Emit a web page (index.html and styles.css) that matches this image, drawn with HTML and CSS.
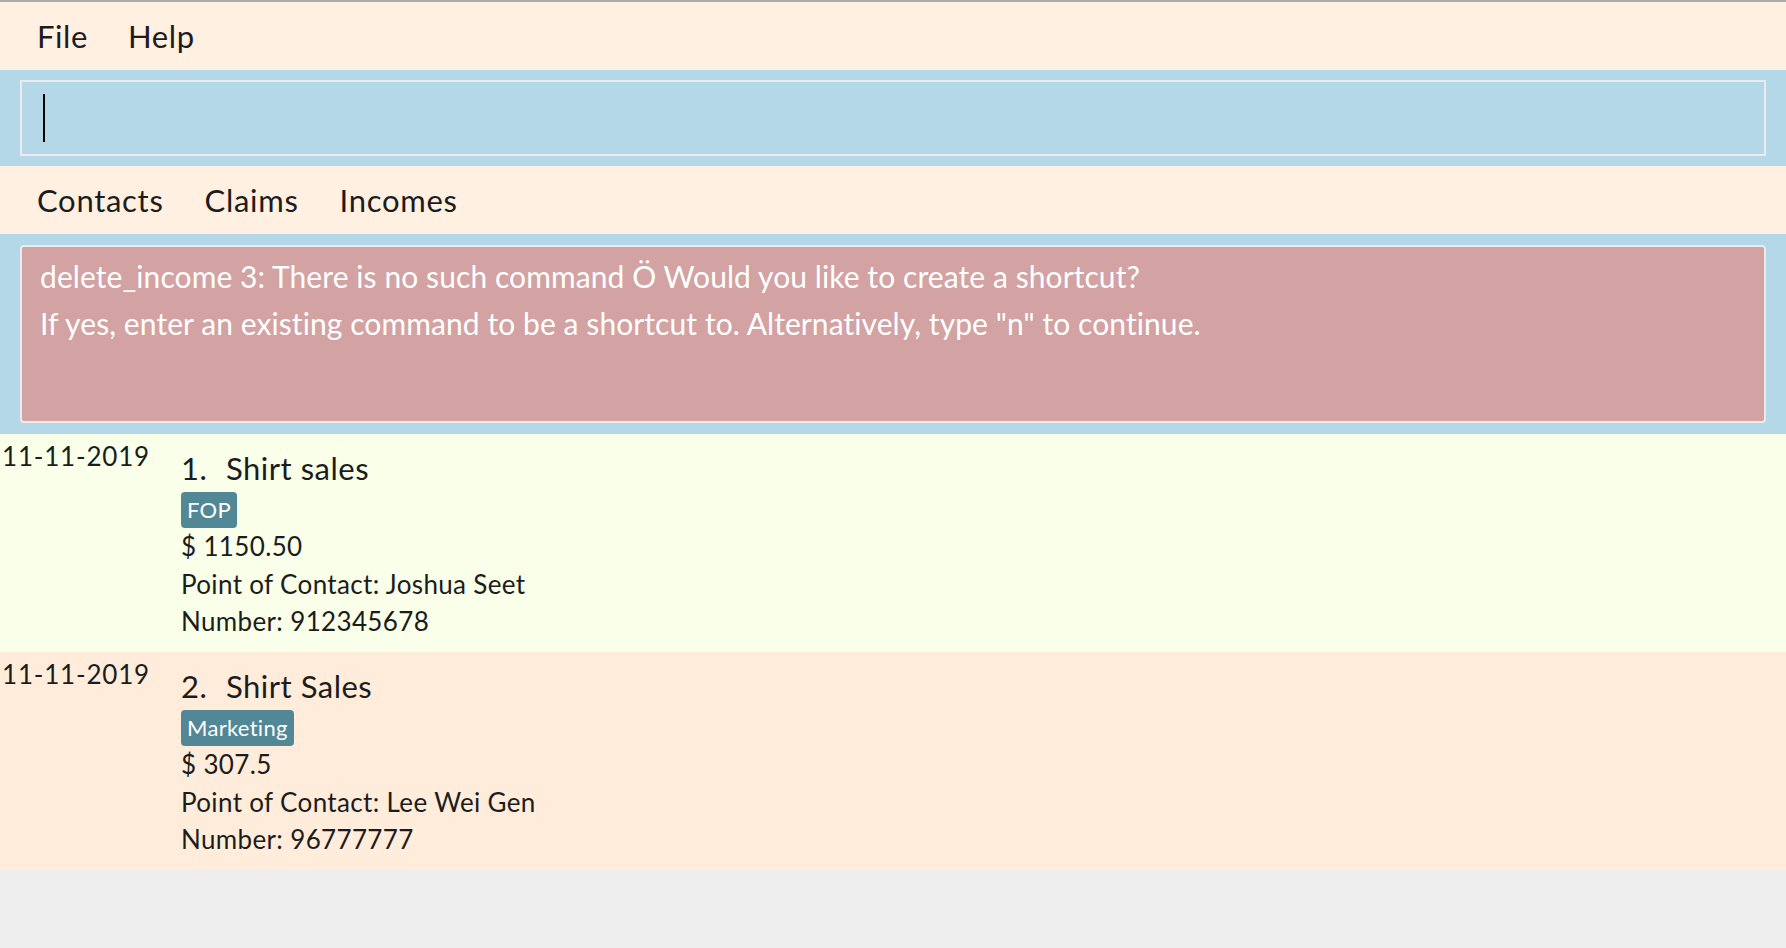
FILE: index.html
```html
<!DOCTYPE html>
<html lang="en">
<head>
<meta charset="utf-8">
<title>Incomes</title>
<link rel="stylesheet" href="styles.css">
</head>
<body>
<div class="app">
  <nav class="menubar">
    <span class="menu-item">File</span>
    <span class="menu-item">Help</span>
  </nav>
  <section class="command-pane">
    <div class="command-box"><span class="caret"></span></div>
  </section>
  <nav class="tabbar">
    <span class="tab">Contacts</span>
    <span class="tab">Claims</span>
    <span class="tab">Incomes</span>
  </nav>
  <section class="result-pane">
    <div class="result-box">
      <p class="result-line">delete_income 3: There is no such command Ö Would you like to create a shortcut?</p>
      <p class="result-line">If yes, enter an existing command to be a shortcut to. Alternatively, type "n" to continue.</p>
    </div>
  </section>
  <ul class="income-list">
    <li class="card card-odd">
      <div class="card-date">11-11-2019</div>
      <div class="card-body">
        <div class="card-title"><span class="card-index">1.</span>Shirt sales</div>
        <div class="tags"><span class="tag">FOP</span></div>
        <div class="card-line">$ 1150.50</div>
        <div class="card-line">Point of Contact: Joshua Seet</div>
        <div class="card-line">Number: 912345678</div>
      </div>
    </li>
    <li class="card card-even">
      <div class="card-date">11-11-2019</div>
      <div class="card-body">
        <div class="card-title"><span class="card-index">2.</span>Shirt Sales</div>
        <div class="tags"><span class="tag">Marketing</span></div>
        <div class="card-line">$ 307.5</div>
        <div class="card-line">Point of Contact: Lee Wei Gen</div>
        <div class="card-line">Number: 96777777</div>
      </div>
    </li>
  </ul>
</div>
</body>
</html>
```

FILE: styles.css
```css
html, body {
  margin: 0;
  padding: 0;
}

body {
  background: #eeeeee;
  font-family: Lato, "Open Sans", "Liberation Sans", sans-serif;
  color: #1c1c1c;
  width: 1786px;
  height: 948px;
  overflow: hidden;
}

.app {
  display: flex;
  flex-direction: column;
}

.menubar {
  border-top: 2px solid #ababab;
  background: #fff0e2;
  height: 68px;
  display: flex;
  align-items: center;
  padding-left: 37px;
  gap: 40px;
  font-size: 31px;
  letter-spacing: 0.6px;
  line-height: 68px;
}

.command-pane {
  background: #b4d8e7;
  padding: 10px 20px;
}

.command-box {
  height: 72px;
  border: 2px solid #ebebeb;
  display: flex;
  align-items: center;
  padding-left: 21px;
}

.caret {
  display: block;
  width: 2px;
  height: 48px;
  background: #000;
}

.tabbar {
  background: #fff0e2;
  height: 68px;
  display: flex;
  align-items: center;
  padding-left: 37px;
  gap: 41px;
  font-size: 31px;
  letter-spacing: 0.7px;
  line-height: 68px;
}

.result-pane {
  background: #b4d8e7;
  padding: 11px 20px;
}

.result-box {
  height: 168px;
  border: 2px solid #ebebeb;
  border-radius: 4px;
  background: #d3a3a3;
  padding: 6px 18px 0;
  color: #ffffff;
  font-size: 30px;
  letter-spacing: 0.08px;
  line-height: 46.5px;
}

.result-line {
  margin: 0;
  white-space: nowrap;
}

.income-list {
  list-style: none;
  margin: 0;
  padding: 0;
}

.card {
  display: flex;
  align-items: flex-start;
}

.card-odd {
  background: #f9ffe8;
}

.card-even {
  background: #ffecdb;
}

.card-date {
  width: 181px;
  padding-left: 2px;
  padding-top: 4px;
  box-sizing: border-box;
  font-size: 26px;
  letter-spacing: 0.8px;
  line-height: 37.5px;
}

.card-body {
  padding: 14px 0 11.5px;
}

.card-title {
  font-size: 31px;
  letter-spacing: 0.5px;
  line-height: 40px;
  display: flex;
}

.card-index {
  width: 45px;
}

.tags {
  display: flex;
  margin-top: 4px;
}

.tag {
  background: #528796;
  color: #ffffff;
  font-size: 22px;
  letter-spacing: 0.3px;
  line-height: 36px;
  height: 36px;
  padding: 0 6px;
  border-radius: 4px;
}

.card-line {
  font-size: 26px;
  letter-spacing: 0.35px;
  line-height: 37.5px;
}
```
